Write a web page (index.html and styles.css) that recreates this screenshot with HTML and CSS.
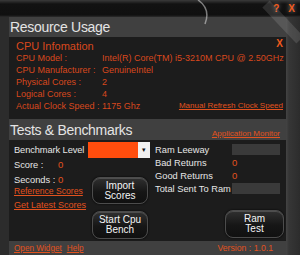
FILE: index.html
```html
<!DOCTYPE html>
<html lang="en">
<head>
    <meta charset="UTF-8">
    <title>Resource Usage</title>
    <link rel="stylesheet" href="styles.css">
</head>
<body>
    <div class="window">
        <div class="titlebar">
            <span class="tb-btn">?</span>
            <span class="tb-btn">X</span>
        </div>
        <div class="frame">
            <div class="edge-left"></div>
            <div class="main">
                <div class="section-title">Resource Usage</div>
                <div class="panel cpu-panel">
                    <div class="panel-head">
                        <span>CPU Infomation</span>
                        <span class="close">X</span>
                    </div>
                    <div class="info-row"><span class="label">CPU Model :</span><span>Intel(R) Core(TM) i5-3210M CPU @ 2.50GHz</span></div>
                    <div class="info-row"><span class="label">CPU Manufacturer :</span><span>GenuineIntel</span></div>
                    <div class="info-row"><span class="label">Physical Cores :</span><span>2</span></div>
                    <div class="info-row"><span class="label">Logical Cores :</span><span>4</span></div>
                    <div class="info-row"><span class="label">Actual Clock Speed :</span><span>1175 Ghz</span><a class="link refresh" href="#">Manual Refresh Clock Speed</a></div>
                </div>
                <div class="section-row">
                    <div class="section-title">Tests &amp; Benchmarks</div>
                    <a class="link" href="#">Application Monitor</a>
                </div>
                <div class="panel bench-panel">
                    <div class="bench-left">
                        <div class="level-row">
                            <span class="level-label">Benchmark Level</span>
                            <div class="dropdown"><div class="dd-value"></div><div class="dd-arrow">&#9662;</div></div>
                        </div>
                        <div class="bench-body">
                            <div class="stats">
                                <div class="stat score">Score : <span class="num">0</span></div>
                                <div class="stat seconds">Seconds : <span class="num">0</span></div>
                                <a class="link ref" href="#">Reference Scores</a>
                                <a class="link latest" href="#">Get Latest Scores</a>
                            </div>
                            <div class="buttons">
                                <button class="btn import">Import<br>Scores</button>
                                <button class="btn start">Start Cpu<br>Bench</button>
                            </div>
                        </div>
                    </div>
                    <div class="bench-right">
                        <div class="ram-row"><span class="ram-label">Ram Leeway</span><span class="box"></span></div>
                        <div class="ram-row"><span class="ram-label">Bad Returns</span><span class="num">0</span></div>
                        <div class="ram-row"><span class="ram-label">Good Returns</span><span class="num">0</span></div>
                        <div class="ram-row"><span class="ram-label">Total Sent To Ram</span><span class="box"></span></div>
                        <button class="btn ram">Ram<br>Test</button>
                    </div>
                </div>
                <div class="footer">
                    <a class="link" href="#">Open Widget</a>
                    <a class="link" href="#">Help</a>
                    <span class="version">Version : 1.0.1</span>
                </div>
            </div>
            <div class="edge-right"></div>
        </div>
        <svg class="deco" width="300" height="255" viewBox="0 0 300 255">
            <path d="M198 0 Q211 9 205 24" fill="none" stroke="rgba(255,255,255,0.45)" stroke-width="1.5"/>
            <path d="M266 4 L300 40" stroke="rgba(255,255,255,0.12)" stroke-width="10"/>
        </svg>
    </div>
</body>
</html>
```

FILE: styles.css
```css
body {
    margin: 0;
    background: #3c3c3c;
    font-family: "Liberation Sans", Arial, sans-serif;
}
.window {
    width: 300px;
    height: 255px;
    position: relative;
    overflow: hidden;
    display: flex;
    flex-direction: column;
    white-space: nowrap;
}
.titlebar {
    height: 17px;
    display: flex;
    justify-content: flex-end;
    align-items: center;
    gap: 9px;
    padding-right: 5px;
    background: linear-gradient(#3a3a3a 0, #262626 2px, #121212 4px, #101010 15px, #2c2c2c 17px);
    background-color: #111;
}
.tb-btn {
    color: #ef5a1c;
    font-size: 10px;
    font-weight: bold;
    text-shadow: 0 0 4px rgba(255,255,255,0.5);
}
.frame {
    flex: 1;
    display: flex;
}
.edge-left {
    width: 9px;
    background: #2c2c2c;
}
.edge-right {
    width: 14px;
    background: linear-gradient(90deg, #444 0, #363636 3px, #2c2c2c 14px);
}
.main {
    flex: 1;
    min-width: 0;
    display: flex;
    flex-direction: column;
    background: #404040;
}
.section-title {
    color: #e4e4e4;
    font-size: 14px;
    letter-spacing: -0.3px;
    height: 20px;
    line-height: 20px;
    padding-left: 1px;
}
.panel {
    background: #1c1c1c;
}
.cpu-panel {
    height: 82px;
    padding: 3px 3px 0 7px;
    box-sizing: border-box;
    color: #d9481c;
}
.panel-head {
    display: flex;
    justify-content: space-between;
    font-size: 11px;
    height: 12px;
    line-height: 12px;
}
.close {
    font-size: 10px;
    font-weight: bold;
    color: #ef5a1c;
    line-height: 8px;
}
.info-row {
    display: flex;
    font-size: 9px;
    height: 12px;
    line-height: 12px;
}
.label {
    width: 86px;
    flex-shrink: 0;
}
.link {
    color: #e2521e;
    font-size: 8px;
    text-decoration: underline;
}
.refresh {
    margin-left: auto;
    font-size: 8px;
}
.section-row {
    display: flex;
    justify-content: space-between;
    align-items: flex-end;
    height: 21px;
    padding-right: 6px;
}
.section-row .section-title {
    height: 21px;
    line-height: 22px;
}
.section-row .link {
    line-height: 12px;
}
.bench-panel {
    height: 101px;
    display: flex;
    color: #e6e6e6;
}
.bench-left {
    width: 141px;
    flex-shrink: 0;
    padding-left: 5px;
    padding-top: 2px;
    box-sizing: border-box;
}
.level-row {
    display: flex;
    align-items: center;
    height: 16px;
}
.level-label {
    width: 74px;
    flex-shrink: 0;
    font-size: 9.3px;
    letter-spacing: -0.1px;
}
.dropdown {
    width: 62px;
    height: 16px;
    display: flex;
}
.dd-value {
    flex: 1;
    background: #ff4d0d;
}
.dd-arrow {
    width: 12px;
    background: #f0f0f0;
    color: #111;
    font-size: 7px;
    text-align: center;
    line-height: 16px;
}
.bench-body {
    display: flex;
}
.stats {
    width: 78px;
    flex-shrink: 0;
    display: flex;
    flex-direction: column;
}
.stat {
    font-size: 9.3px;
    height: 12px;
    line-height: 12px;
}
.score {
    margin-top: 1px;
}
.seconds {
    margin-top: 3px;
}
.score .num {
    margin-left: 12px;
}
.seconds .num {
    margin-left: 0;
}
.num {
    color: #e2521e;
    font-size: 9.5px;
}
.stats .link {
    font-size: 8.6px;
    height: 14px;
    line-height: 14px;
}
.ref {
    margin-top: -2px;
}
.stats .latest {
    font-size: 9px;
}
.buttons {
    display: flex;
    flex-direction: column;
    gap: 7px;
    padding-top: 19px;
}
.btn {
    width: 56px;
    height: 27px;
    padding: 0;
    border: 1px solid #4c4c4c;
    border-radius: 8px;
    background: linear-gradient(#303030, #161616 55%, #101010);
    box-shadow: inset 0 1px 0 rgba(255,255,255,0.15), 0 0 2px #000;
    color: #f4f4f4;
    font-family: "Liberation Sans", Arial, sans-serif;
    font-size: 10px;
    line-height: 10px;
}
.start {
    height: 28px;
}
.bench-right {
    flex: 1;
    min-width: 0;
    display: flex;
    flex-direction: column;
    padding: 3px 2px 0 5px;
}
.ram-row {
    display: flex;
    align-items: center;
    height: 13px;
    font-size: 9.3px;
}
.ram-label {
    width: 77px;
    flex-shrink: 0;
}
.box {
    width: 48px;
    height: 11px;
    background: #3a3a3a;
}
.ram {
    align-self: flex-end;
    width: 59px;
    height: 28px;
    margin-top: 15px;
}
.footer {
    flex: 1;
    display: flex;
    align-items: center;
    gap: 5px;
    padding-left: 5px;
    padding-right: 13px;
}
.footer .link {
    font-size: 8.2px;
}
.version {
    margin-left: auto;
    color: #e2521e;
    font-size: 8.7px;
}
.deco {
    position: absolute;
    left: 0;
    top: 0;
    pointer-events: none;
}
```
